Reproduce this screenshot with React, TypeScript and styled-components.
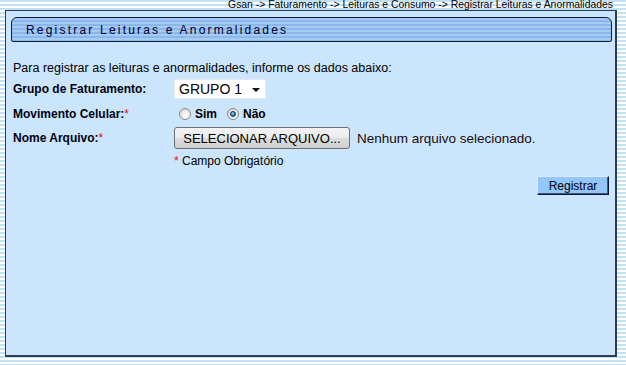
import styled, { createGlobalStyle } from 'styled-components';

const GlobalStyle = createGlobalStyle`
  html, body {
    margin: 0;
    padding: 0;
  }
  body {
    font-family: "Liberation Sans", Arial, sans-serif;
    background: repeating-linear-gradient(
      to bottom,
      #c2e1f5 0px,
      #c2e1f5 2px,
      #ffffff 2px,
      #ffffff 4px
    );
    min-height: 365px;
  }
`;

const Breadcrumb = styled.div`
  height: 10px;
  line-height: 10px;
  font-size: 10.4px;
  color: #000;
  text-align: right;
  padding-right: 13px;
  white-space: nowrap;
`;

const Panel = styled.div`
  box-sizing: border-box;
  margin: 0 9px 0 5px;
  height: 347px;
  background: #cbe5fc;
  border: 1px solid #2a3d57;
  border-right-width: 2px;
  border-bottom-width: 2px;
  padding: 6px 3px 0 5px;
`;

const TitleBar = styled.div`
  box-sizing: border-box;
  height: 25px;
  border: 1px solid #0e1c38;
  border-radius: 6px 6px 2px 2px;
  background: repeating-linear-gradient(
    to bottom,
    #a5cbf3 0px,
    #a5cbf3 2px,
    #8ab7eb 2px,
    #8ab7eb 4px
  );
  display: flex;
  align-items: center;
  padding-left: 14px;
  font-size: 12px;
  letter-spacing: 2.2px;
  color: #00002e;
`;

const Form = styled.div`
  padding: 19px 3px 0 2px;
  font-size: 12px;
  color: #000;
`;

const Intro = styled.div`
  line-height: 14px;
  height: 14px;
  font-size: 12.5px;
`;

const Row = styled.div<{ $top: number; $h: number }>`
  display: grid;
  grid-template-columns: 161px 1fr;
  align-items: center;
  margin-top: ${(p) => p.$top}px;
  height: ${(p) => p.$h}px;
`;

const Label = styled.div`
  font-weight: bold;
  color: #000014;
`;

const Req = styled.span`
  color: #e01010;
  font-weight: normal;
`;

const SelectBox = styled.div`
  box-sizing: border-box;
  width: 92px;
  height: 20px;
  background: #fff;
  border: 1px solid #e2e8ee;
  display: flex;
  align-items: center;
  justify-content: space-between;
  padding: 0 5px 0 4px;
  font-size: 14px;
  color: #000;
`;

const Caret = styled.span`
  width: 0;
  height: 0;
  border-left: 4px solid transparent;
  border-right: 4px solid transparent;
  border-top: 4px solid #000;
  margin-top: 2px;
`;

const Radios = styled.div`
  display: flex;
  align-items: center;
  padding-left: 5px;
`;

const RadioDot = styled.span<{ $checked?: boolean }>`
  box-sizing: border-box;
  width: 12px;
  height: 12px;
  border-radius: 50%;
  border: 1px solid #8c8c8c;
  background: radial-gradient(circle at 60% 65%, #ffffff 0%, #f0f0f0 40%, #c8c8c8 100%);
  display: inline-flex;
  align-items: center;
  justify-content: center;
  margin-right: 4px;

  &::after {
    content: '';
    display: ${(p) => (p.$checked ? 'block' : 'none')};
    width: 6px;
    height: 6px;
    border-radius: 50%;
    background: radial-gradient(circle at 40% 35%, #8fe0ff 0%, #2a8ad0 55%, #0b3f73 100%);
    border: 1px solid #1b2f4a;
    box-sizing: border-box;
  }
`;

const RadioText = styled.span`
  font-weight: bold;
  font-size: 12px;
  margin-right: 10px;
`;

const FileRow = styled.div`
  display: flex;
  align-items: center;
  gap: 7px;
`;

const FileButton = styled.button`
  box-sizing: border-box;
  width: 176px;
  height: 22px;
  border: 1px solid #707070;
  border-radius: 3px;
  background: linear-gradient(to bottom, #f3f3f3 0%, #ebebeb 50%, #dddddd 51%, #cfcfcf 100%);
  font-family: "Liberation Sans", Arial, sans-serif;
  font-size: 13px;
  color: #000;
  padding: 0;
  white-space: nowrap;
`;

const FileText = styled.span`
  font-size: 13.5px;
  color: #1a0a10;
`;

const Note = styled.div`
  margin-top: 5px;
  padding-left: 161px;
  line-height: 14px;
  font-size: 12px;
`;

const Actions = styled.div`
  display: flex;
  justify-content: flex-end;
  margin-top: 8px;
`;

const SubmitButton = styled.button`
  box-sizing: border-box;
  width: 72px;
  height: 19px;
  background: #93c6fb;
  border: 1px solid #0a1530;
  border-top-color: #dce9f7;
  border-left-color: #dce9f7;
  box-shadow: inset -1px -1px 0 #3b5a80;
  font-family: "Liberation Sans", Arial, sans-serif;
  font-size: 12px;
  color: #000;
  padding: 0;
`;

export default function App() {
  return (
    <>
      <GlobalStyle />
      <Breadcrumb>
        Gsan -&gt; Faturamento -&gt; Leituras e Consumo -&gt; Registrar Leituras e Anormalidades
      </Breadcrumb>
      <Panel>
        <TitleBar>Registrar Leituras e Anormalidades</TitleBar>
        <Form>
          <Intro>Para registrar as leituras e anormalidades, informe os dados abaixo:</Intro>
          <Row $top={4} $h={20}>
            <Label>Grupo de Faturamento:</Label>
            <SelectBox>
              GRUPO 1
              <Caret />
            </SelectBox>
          </Row>
          <Row $top={5} $h={20}>
            <Label>
              Movimento Celular:<Req>*</Req>
            </Label>
            <Radios>
              <RadioDot />
              <RadioText>Sim</RadioText>
              <RadioDot $checked />
              <RadioText>Não</RadioText>
            </Radios>
          </Row>
          <Row $top={3} $h={22}>
            <Label>
              Nome Arquivo:<Req>*</Req>
            </Label>
            <FileRow>
              <FileButton>SELECIONAR ARQUIVO...</FileButton>
              <FileText>Nenhum arquivo selecionado.</FileText>
            </FileRow>
          </Row>
          <Note>
            <Req>*</Req> Campo Obrigatório
          </Note>
          <Actions>
            <SubmitButton>Registrar</SubmitButton>
          </Actions>
        </Form>
      </Panel>
    </>
  );
}
